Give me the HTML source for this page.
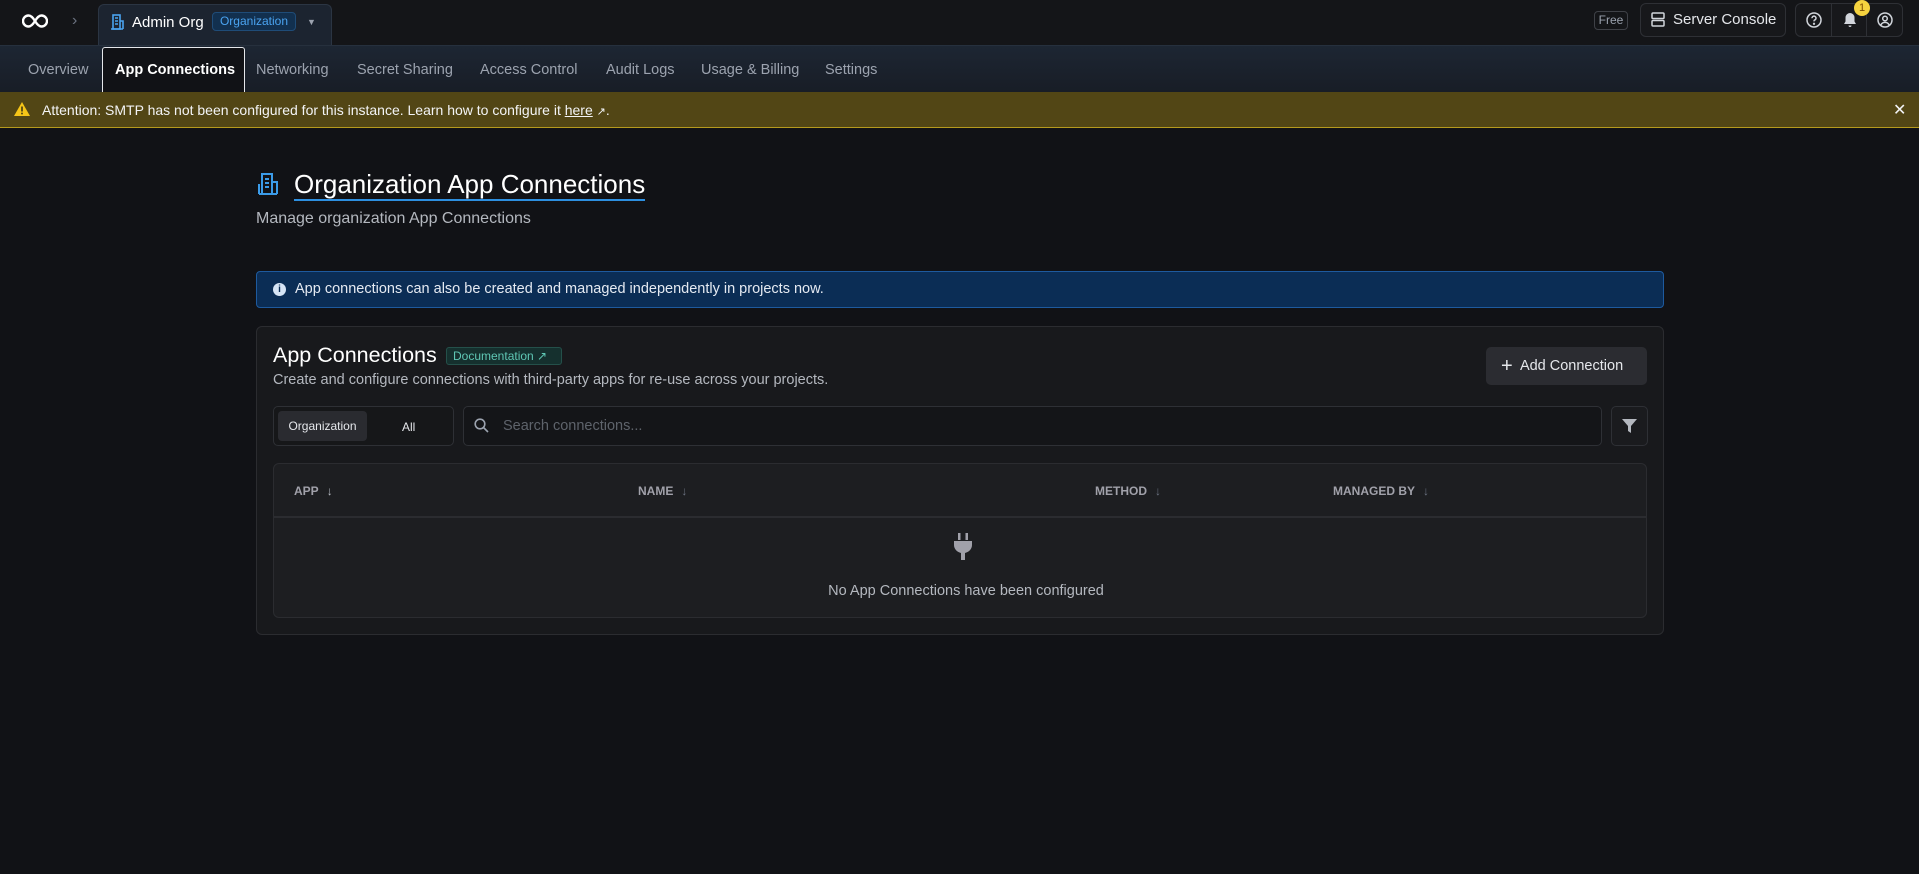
<!DOCTYPE html>
<html><head><meta charset="utf-8"><style>
*{box-sizing:border-box;margin:0;padding:0}
body{width:1919px;height:874px;background:#111216;font-family:"Liberation Sans",sans-serif;color:#e5e7eb;position:relative;overflow:hidden}
.a{position:absolute}
.top{left:0;top:0;width:1919px;height:45px;background:#141518}
.nav{left:0;top:45px;width:1919px;height:47px;background:linear-gradient(#1d2633,#181d26);border-top:1px solid #26303d}
.nav span{position:absolute;top:16px;font-size:14.5px;color:#9ca3af}
.warn{left:0;top:92px;width:1919px;height:36px;background:#524615;border-bottom:1px solid #b59a1d;font-size:14px;color:#f3f4f6}
.btn{border:1px solid #2e3035;border-radius:6px;background:#17181b}
.th{position:absolute;top:20px;font-size:12px;font-weight:bold;color:#a1a1aa}
.th i{font-style:normal;color:#6b7280;margin-left:8px;font-weight:normal}
</style></head><body>
<div class="a top"></div>
<svg class="a" style="left:22px;top:14px" width="26" height="14" viewBox="0 0 26 14" fill="none" stroke="#fff" stroke-width="2.4"><path d="M13 7C10 2 8 1.5 6.5 1.5a5.5 5.5 0 0 0 0 11C8 12.5 10 12 13 7s5-5.5 6.5-5.5a5.5 5.5 0 0 1 0 11C18 12.5 16 12 13 7z"/></svg>
<div class="a" style="left:72px;top:12px;color:#6b7280;font-size:16px">›</div>
<div class="a" style="left:98px;top:4px;width:234px;height:42px;background:#1c2430;border:1px solid #2b3543;border-bottom:none;border-radius:6px 6px 0 0"></div>
<svg class="a" style="left:110px;top:14px" width="14" height="16" viewBox="0 0 14 16" fill="none" stroke="#4aa3f0" stroke-width="1.6"><rect x="3" y="1" width="7" height="14"/><path d="M1 15h12M10 7h3v8M5 4h3M5 7h3M5 10h3"/></svg>
<div class="a" style="left:132px;top:14px;font-size:15px;color:#fff">Admin Org</div>
<div class="a" style="left:212px;top:12px;width:84px;height:19px;background:#12304f;border:1px solid #1f4c78;border-radius:4px;color:#4aa3f0;font-size:12px;text-align:center;line-height:17px">Organization</div>
<div class="a" style="left:307px;top:17px;font-size:9px;color:#9ca3af">▼</div>
<div class="a" style="left:1594px;top:11px;width:34px;height:19px;border:1px solid #3f4147;border-radius:4px;font-size:12px;color:#9ca3af;text-align:center;line-height:17px">Free</div>
<div class="a btn" style="left:1640px;top:3px;width:146px;height:34px"></div>
<svg class="a" style="left:1651px;top:12px" width="14" height="15" viewBox="0 0 14 15" fill="none" stroke="#d1d5db" stroke-width="1.5"><rect x="1" y="1" width="12" height="5.5" rx="1"/><rect x="1" y="8.5" width="12" height="5.5" rx="1"/></svg>
<div class="a" style="left:1673px;top:11px;font-size:15px;color:#e5e7eb">Server Console</div>
<div class="a btn" style="left:1795px;top:3px;width:108px;height:34px"></div>
<div class="a" style="left:1831px;top:4px;width:1px;height:32px;background:#2e3035"></div>
<div class="a" style="left:1866px;top:4px;width:1px;height:32px;background:#2e3035"></div>
<svg class="a" style="left:1806px;top:12px" width="16" height="16" viewBox="0 0 16 16" fill="none" stroke="#d1d5db" stroke-width="1.5"><circle cx="8" cy="8" r="7"/><path d="M6 6.2a2 2 0 1 1 2.5 1.9c-.5.2-.5.6-.5 1.3"/><circle cx="8" cy="11.8" r=".4" fill="#d1d5db"/></svg>
<svg class="a" style="left:1843px;top:12px" width="14" height="16" viewBox="0 0 14 16"><path d="M7 1a4.5 4.5 0 0 0-4.5 4.5v4L1 12h12l-1.5-2.5v-4A4.5 4.5 0 0 0 7 1zM5.5 13.5a1.5 1.5 0 0 0 3 0z" fill="#d1d5db"/></svg>
<div class="a" style="left:1854px;top:0px;width:16px;height:16px;border-radius:50%;background:#f5d33f;color:#7a4d00;font-size:11px;text-align:center;line-height:16px">1</div>
<svg class="a" style="left:1877px;top:12px" width="16" height="16" viewBox="0 0 16 16" fill="none" stroke="#d1d5db" stroke-width="1.5"><circle cx="8" cy="8" r="7"/><circle cx="8" cy="6.5" r="2.3"/><path d="M3.8 13c1-1.8 2.5-2.6 4.2-2.6s3.2.8 4.2 2.6"/></svg>

<div class="a nav">
<span style="left:28px">Overview</span>
<div class="a" style="left:102px;top:1px;width:143px;height:46px;background:#111216;border:1px solid #e5e7eb;border-bottom:none;border-radius:3px 3px 0 0"></div>
<span style="left:115px;color:#fff;font-weight:bold">App Connections</span>
<span style="left:256px">Networking</span>
<span style="left:357px">Secret Sharing</span>
<span style="left:480px">Access Control</span>
<span style="left:606px">Audit Logs</span>
<span style="left:701px">Usage &amp; Billing</span>
<span style="left:825px">Settings</span>
</div>
<div class="a warn">
<svg class="a" style="left:14px;top:10px" width="16" height="14" viewBox="0 0 16 14"><path d="M8 0L16 14H0z" fill="#f5c518"/><path d="M8 4.5v5" stroke="#524615" stroke-width="1.8"/><circle cx="8" cy="11.5" r="1" fill="#524615"/></svg>
<div class="a" style="left:42px;top:10px">Attention: SMTP has not been configured for this instance. Learn how to configure it <u>here</u> <span style="font-size:11px">↗</span>.</div>
<div class="a" style="left:1893px;top:8px;font-size:16px">✕</div>
</div>

<svg class="a" style="left:257px;top:172px" width="22" height="24" viewBox="0 0 22 24" fill="none" stroke="#3b9be8" stroke-width="2"><rect x="5" y="2" width="10" height="20"/><path d="M2 22h18M15 10h5v12M8 7h4M8 11h4M8 15h4M2 12v10"/></svg>
<div class="a" style="left:294px;top:169px;font-size:26px;color:#fff;border-bottom:2px solid #2d8fe0;line-height:30px">Organization App Connections</div>
<div class="a" style="left:256px;top:210px;font-size:16px;color:#b4b8bf">Manage organization App Connections</div>

<div class="a" style="left:256px;top:271px;width:1408px;height:37px;background:#0b2d55;border:1px solid #1e5a9e;border-radius:4px"></div>
<div class="a" style="left:273px;top:283px;width:13px;height:13px;border-radius:50%;background:#d6e4f5;color:#0b2d55;font-size:10px;font-weight:bold;text-align:center;line-height:13px">i</div>
<div class="a" style="left:295px;top:281px;font-size:14.5px;color:#e5eaf2">App connections can also be created and managed independently in projects now.</div>

<div class="a" style="left:256px;top:326px;width:1408px;height:309px;background:#18191c;border:1px solid #2b2c30;border-radius:6px"></div>
<div class="a" style="left:273px;top:343px;font-size:21.5px;color:#fff">App Connections</div>
<div class="a" style="left:446px;top:347px;width:116px;height:18px;background:#15302e;border:1px solid #24504a;border-radius:3px;color:#5fc7b4;font-size:12px;padding-left:6px;line-height:16px">Documentation ↗</div>
<div class="a" style="left:273px;top:372px;font-size:14.5px;color:#b4b8bf">Create and configure connections with third-party apps for re-use across your projects.</div>
<div class="a" style="left:1486px;top:347px;width:161px;height:38px;background:#2b2c31;border-radius:5px;font-size:14.5px;color:#e5e7eb;line-height:38px;padding-left:15px"><span style="font-size:20px;vertical-align:-2px">+</span>&nbsp; Add Connection</div>

<div class="a" style="left:273px;top:406px;width:181px;height:40px;border:1px solid #2e3035;border-radius:5px;background:#161719"></div>
<div class="a" style="left:278px;top:411px;width:89px;height:30px;background:#2a2b30;border-radius:4px;font-size:12px;color:#e5e7eb;text-align:center;line-height:30px">Organization</div>
<div class="a" style="left:402px;top:420px;font-size:12px;color:#e5e7eb">All</div>
<div class="a" style="left:463px;top:406px;width:1139px;height:40px;border:1px solid #2e3035;border-radius:5px;background:#141518"></div>
<svg class="a" style="left:474px;top:418px" width="15" height="15" viewBox="0 0 15 15" fill="none" stroke="#9ca3af" stroke-width="1.6"><circle cx="6" cy="6" r="4.8"/><path d="M9.5 9.5l4.5 4.5"/></svg>
<div class="a" style="left:503px;top:418px;font-size:14.5px;color:#5e636b">Search connections...</div>
<div class="a" style="left:1611px;top:406px;width:37px;height:40px;border:1px solid #2e3035;border-radius:5px;background:#1a1b1e"></div>
<svg class="a" style="left:1622px;top:419px" width="15" height="14" viewBox="0 0 15 14"><path d="M0 0h15L9 7v7L6 12V7z" fill="#b4b8bf"/></svg>

<div class="a" style="left:273px;top:463px;width:1374px;height:155px;background:#1d1e21;border:1px solid #2b2c30;border-radius:6px">
<div class="th" style="left:20px">APP<i style="color:#b4b8bf">↓</i></div>
<div class="th" style="left:364px">NAME<i>↓</i></div>
<div class="th" style="left:821px">METHOD<i>↓</i></div>
<div class="th" style="left:1059px">MANAGED BY<i>↓</i></div>
<div class="a" style="left:0;top:52px;width:100%;height:2px;background:#2b2c30"></div>
<svg class="a" style="left:677px;top:69px" width="24" height="28" viewBox="0 0 24 28"><rect x="7" y="0" width="2.5" height="7" fill="#a1a1aa"/><rect x="14.5" y="0" width="2.5" height="7" fill="#a1a1aa"/><path d="M3 8h18v4c0 4-3 7-7 8v7h-4v-7c-4-1-7-4-7-8z" fill="#a1a1aa"/></svg>
<div class="a" style="left:0;width:100%;top:119px;text-align:center;font-size:14.5px;color:#b4b8bf;padding-left:12px">No App Connections have been configured</div>
</div>
</body></html>
